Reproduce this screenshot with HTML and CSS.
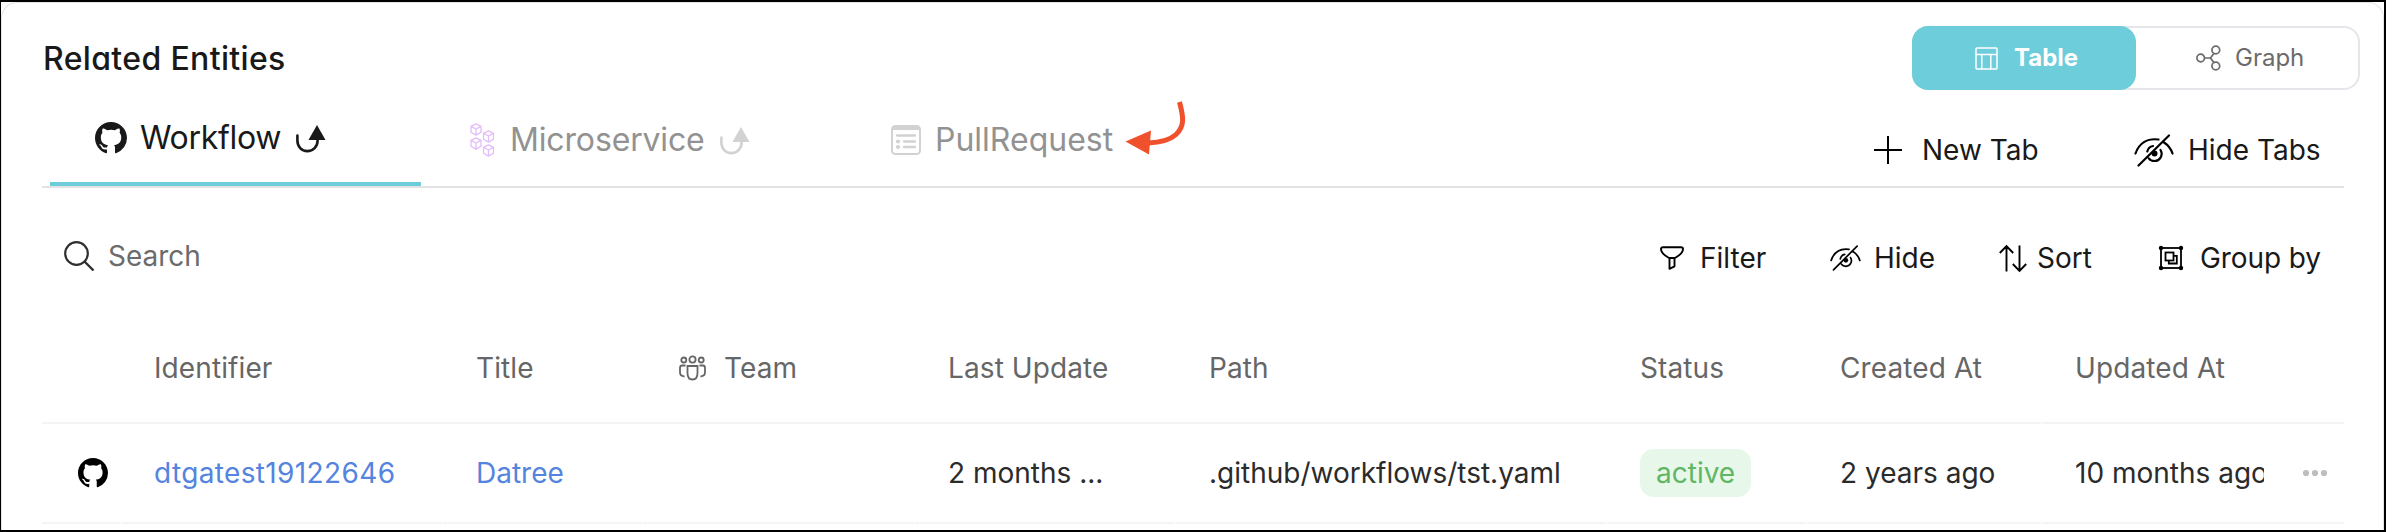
FILE: index.html
```html
<!DOCTYPE html>
<html lang="en">
<head>
<meta charset="utf-8">
<title>Related Entities</title>
<link rel="stylesheet" href="styles.css">
</head>
<body>
<svg width="0" height="0" class="defs">
  <symbol id="github" viewBox="0 0 16 16"><path fill="currentColor" d="M8 0C3.58 0 0 3.58 0 8c0 3.54 2.29 6.53 5.47 7.59.4.07.55-.17.55-.38 0-.19-.01-.82-.01-1.49-2.01.37-2.53-.49-2.69-.94-.09-.23-.48-.94-.82-1.13-.28-.15-.68-.52-.01-.53.63-.01 1.08.58 1.23.82.72 1.21 1.87.87 2.33.66.07-.52.28-.87.51-1.07-1.78-.2-3.64-.89-3.64-3.95 0-.87.31-1.59.82-2.15-.08-.2-.36-1.02.08-2.12 0 0 .67-.21 2.2.82.64-.18 1.32-.27 2-.27s1.36.09 2 .27c1.53-1.04 2.2-.82 2.2-.82.44 1.1.16 1.92.08 2.12.51.56.82 1.27.82 2.15 0 3.07-1.87 3.75-3.65 3.95.29.25.54.73.54 1.48 0 1.07-.01 1.93-.01 2.2 0 .21.15.46.55.38A8.01 8.01 0 0 0 16 8c0-4.42-3.58-8-8-8z"/></symbol>
  <symbol id="turn" viewBox="0 0 30 28"><path d="M1.400 10.500V15.500C1.400 21.500 5.500 26.100 11.300 26.100S21.600 21.700 21.600 15.500V12" fill="none" stroke="currentColor" stroke-width="2.600" stroke-linecap="round"/><path fill="currentColor" d="M21 0L29.500 15H12.500z"/></symbol>
  <symbol id="eye" viewBox="0 0 40 33"><g fill="none" stroke="currentColor" stroke-width="2.200" stroke-linecap="round"><path d="M1.500 19.500C5 9.500 13 4 24.500 5.500M30 8.500C34 11 37 15 38.500 19.500M4.500 31.500L35 1.500M13.300 17.500C14 14.500 16 12.500 19 12M26.500 16C29.500 21 26 27 20.500 27C18 27 16 26 14.800 24.300"/></g><circle cx="20.500" cy="19.500" r="3" fill="currentColor"/></symbol>
  <symbol id="cube" viewBox="0 0 12 13"><path d="M6 .8L11 3.300V9.200L6 12.100L1 9.200V3.300zM1.500 3.700L6 6L10.500 3.700M6 6V11.800" fill="none" stroke="currentColor" stroke-width="1.300" stroke-linejoin="round"/></symbol>
</svg>
<main class="card">
  <header class="head">
    <h1 class="title">Related Entities</h1>
    <div class="switch">
      <button class="mode mode-on">
        <svg class="mode-icon" width="23" height="23" viewBox="0 0 23 23"><path d="M2 1H21Q22 1 22 2V21Q22 22 21 22H2Q1 22 1 21V2Q1 1 2 1zM1 7.500H22M6.800 7.500V22M15.800 7.500V22" fill="none" stroke="currentColor" stroke-width="1.500"/></svg>
        <span>Table</span>
      </button>
      <button class="mode mode-off">
        <svg class="mode-icon" width="25" height="26" viewBox="0 0 25 26"><g fill="none" stroke="currentColor" stroke-width="1.700"><circle cx="4.700" cy="13" r="3.800"/><circle cx="19.800" cy="5" r="3.900"/><circle cx="19.800" cy="21" r="3.900"/><path d="M8.500 13H14.500M17.800 8.500L14.500 13L17.800 17.600"/></g></svg>
        <span>Graph</span>
      </button>
    </div>
  </header>

  <nav class="tabs">
    <div class="tab tab-on">
      <svg class="i-gh" width="32" height="32"><use href="#github"/></svg>
      <span class="tab-name workflow">Workflow</span>
      <svg class="i-turn" width="30" height="28"><use href="#turn"/></svg>
    </div>
    <div class="tab tab-micro">
      <svg class="i-cubes" width="25" height="34" viewBox="0 0 25 34"><use href="#cube" width="12" height="13"/><use href="#cube" x="12.500" y="7" width="12" height="13"/><use href="#cube" y="14" width="12" height="13"/><use href="#cube" x="12.500" y="21" width="12" height="13"/></svg>
      <span class="tab-name micro">Microservice</span>
      <svg class="i-turn" width="30" height="28"><use href="#turn"/></svg>
    </div>
    <div class="tab tab-pull">
      <svg class="i-form" width="30" height="30" viewBox="0 0 30 30"><rect x="1" y="1" width="28" height="28" rx="3.500" fill="none" stroke="currentColor" stroke-width="2"/><path d="M1 5V4Q1 1 4 1H26Q29 1 29 4V5z" fill="currentColor"/><path d="M6 10.500H24M13 16.500H24M13 22H24" stroke="currentColor" stroke-width="2.300" stroke-linecap="round"/><circle cx="7" cy="16.500" r="2.100" fill="currentColor"/><circle cx="7" cy="22" r="2.100" fill="currentColor"/></svg>
      <span class="tab-name pull">PullRequest</span>
      <svg class="i-red" width="61" height="54" viewBox="0 0 61 54"><path d="M54.500 1C58.500 16 60 25 51 33.500C44.500 39.500 35 41.500 23 42" fill="none" stroke="#ee512c" stroke-width="5"/><path d="M.5 40.500L26 29.500L24 53.500z" fill="#ee512c"/></svg>
    </div>
    <div class="tab-actions">
      <button class="action new-tab">
        <svg class="i-plus" width="28" height="28" viewBox="0 0 28 28"><path d="M14 0V28M0 14H28" stroke="currentColor" stroke-width="2"/></svg>
        <span>New Tab</span>
      </button>
      <button class="action hide-tabs">
        <svg class="i-eye" width="40" height="33"><use href="#eye"/></svg>
        <span>Hide Tabs</span>
      </button>
    </div>
  </nav>

  <div class="toolbar">
    <label class="search">
      <svg width="31" height="31" viewBox="0 0 31 31"><circle cx="12.500" cy="12.500" r="11.300" fill="none" stroke="#2f2f2f" stroke-width="2.200"/><path d="M20.500 20.500L29.500 29.500" stroke="#2f2f2f" stroke-width="2.400"/></svg>
      <span>Search</span>
    </label>
    <div class="tools">
      <button class="action filter">
        <svg width="24" height="24" viewBox="0 0 24 24"><path d="M3 1.200H21Q23 1.200 23 3Q23 7.500 15 12H9Q1 7.500 1 3Q1 1.200 3 1.200zM9.500 12V22.800L14.500 20.300V12" fill="none" stroke="currentColor" stroke-width="1.900" stroke-linejoin="round"/></svg>
        <span>Filter</span>
      </button>
      <button class="action hide">
        <svg width="31" height="26" viewBox="0 0 40 33" preserveAspectRatio="none"><use href="#eye" width="40" height="33"/></svg>
        <span>Hide</span>
      </button>
      <button class="action sort">
        <svg width="28" height="27" viewBox="0 0 28 27"><path d="M7.500 26.500V1.500M.8 8L7.500 1.200L14.200 8M20.500 .5V25.500M13.800 19L20.500 25.800L27.200 19" fill="none" stroke="currentColor" stroke-width="1.900"/></svg>
        <span>Sort</span>
      </button>
      <button class="action group">
        <svg width="24" height="24" viewBox="0 0 24 24"><g fill="none" stroke="currentColor" stroke-width="1.800"><rect x="2" y="2" width="20" height="20"/><rect x="6.500" y="6.500" width="8" height="8"/><path d="M14.500 9.800H17.800V17.500H9.800V14.500"/></g><g fill="currentColor"><circle cx="2" cy="2" r="2.200"/><circle cx="22" cy="2" r="2.200"/><circle cx="2" cy="22" r="2.200"/><circle cx="22" cy="22" r="2.200"/></g></svg>
        <span>Group by</span>
      </button>
    </div>
  </div>

  <section class="table">
    <div class="row row-head">
      <div class="cell"></div>
      <div class="cell">Identifier</div>
      <div class="cell title-cell">Title</div>
      <div class="cell team">
        <svg width="27" height="26" viewBox="0 0 27 26"><g fill="none" stroke="currentColor" stroke-width="1.800"><circle cx="13.500" cy="4.500" r="3.100"/><circle cx="4.800" cy="5" r="2.500"/><circle cx="22.200" cy="5" r="2.500"/><path d="M8.500 11H18.500V18Q18.500 24.500 13.500 24.500T8.500 18zM6.500 10.500H3Q1 10.500 1 13V17.500Q1 21 5.500 21.500M20.500 10.500H24Q26 10.500 26 13V17.500Q26 21 21.500 21.500"/></g></svg>
        <span>Team</span>
      </div>
      <div class="cell">Last Update</div>
      <div class="cell">Path</div>
      <div class="cell">Status</div>
      <div class="cell">Created At</div>
      <div class="cell updated">Updated At</div>
    </div>
    <div class="row row-data">
      <div class="cell source"><svg width="30" height="30"><use href="#github"/></svg></div>
      <div class="cell"><a class="link ident">dtgatest19122646</a></div>
      <div class="cell title-cell"><a class="link">Datree</a></div>
      <div class="cell"></div>
      <div class="cell">2 months ...</div>
      <div class="cell">.github/workflows/tst.yaml</div>
      <div class="cell status"><span class="badge">active</span></div>
      <div class="cell">2 years ago</div>
      <div class="cell updated">
        <span class="clip">10 months ago</span>
        <svg width="26" height="8" viewBox="0 0 26 8"><g fill="#bdbdbd"><circle cx="4" cy="4" r="3.100"/><circle cx="13" cy="4" r="3.100"/><circle cx="22" cy="4" r="3.100"/></g></svg>
      </div>
    </div>
  </section>
</main>
</body>
</html>
```
FILE: styles.css
```css
* { box-sizing: border-box; }
body {
  margin: 0;
  height: 532px;
  overflow: hidden;
  border: solid #000;
  border-width: 2px 2px 2px 1px;
  background: #fff;
  font-family: Inter, "Liberation Sans", sans-serif;
  font-size: 28px;
  line-height: 34px;
  color: #191919;
}
.defs { display: block; }
svg { flex: none; display: block; overflow: visible; }
button { font: inherit; color: inherit; background: none; border: 0; padding: 0; margin: 0; text-align: left; }
span, .cell { white-space: nowrap; }

.card {
  height: 528px;
  border: 1px solid #e4e4e4;
  border-bottom: 0;
  border-radius: 16px 16px 0 0;
  padding: 23px 23px 0 40px;
  background: #fff;
}
.head { display: flex; justify-content: space-between; align-items: center; height: 64px; }
.title {
  margin: 0;
  padding: 2px 0 0 1px;
  font-size: 32px;
  line-height: 40px;
  font-weight: 500;
  letter-spacing: 0.35px;
  font-feature-settings: "cv11";
}

.switch {
  display: flex;
  width: 448px;
  height: 64px;
  border-radius: 16px;
  box-shadow: inset 0 0 0 2px #e6e6ea;
  font-size: 24px;
}
.mode { display: flex; align-items: center; width: 224px; height: 64px; border-radius: 16px; }
.mode-on { background: #6dcddb; color: #fff; font-weight: 700; padding-left: 63px; gap: 16px; }
.mode-off { color: #6b6b6b; padding-left: 60px; gap: 14px; }

.tabs { display: flex; width: 2302px; height: 98px; padding-left: 8px; border-bottom: 2px solid #e3e3e3; }
.tab { display: flex; align-items: center; font-size: 32px; line-height: 40px; }
.tab-on { width: 371px; padding-left: 45px; border-bottom: 4px solid #6dcddb; padding-top: 4px; }
.i-gh { margin-right: 13px; }
.workflow { width: 156px; letter-spacing: -0.3px; }
.i-turn { margin-top: 2px; }
.tab-micro { width: 421px; padding: 3px 0 0 49px; color: #d2d2d2; }
.i-cubes { color: #e3bdfb; margin-right: 15px; }
.tab-name { flex: none; }
.tab-micro .tab-name, .tab-pull .tab-name { color: #929292; }
.micro { width: 210px; letter-spacing: -0.15px; }
.tab-pull { padding: 3px 0 0 49px; color: #d2d2d2; }
.i-form { margin-right: 14px; }
.pull { width: 190px; }
.i-red { margin-bottom: 24px; }

.tab-actions { display: flex; margin-left: auto; padding-top: 24px; width: 470px; }
.action { display: flex; align-items: center; }
.action svg { color: #000; }
.new-tab { width: 260px; gap: 20px; }
.hide-tabs { gap: 14px; }

.toolbar { display: flex; justify-content: space-between; width: 2302px; height: 124px; padding-top: 14px; }
.search { display: flex; align-items: center; gap: 13px; padding: 0 0 2px 22px; color: #6b6b6b; }
.tools { display: flex; width: 684px; padding-top: 2px; }
.filter { width: 170px; gap: 16px; }
.hide { width: 169px; gap: 13px; }
.sort { width: 160px; gap: 10px; }
.group { gap: 17px; letter-spacing: -0.1px; }

.row { display: grid; width: 2302px; }
.cell { display: flex; align-items: center; padding-left: 33px; border-bottom: 2px solid #f4f4f4; min-width: 0; }
.row-head {
  grid-template-columns: 79px 322px 200px 272px 261px 431px 200px 235px 1fr;
  height: 112px;
  color: #666;
  letter-spacing: 0.1px;
}
.row-head .cell { padding-top: 2px; }
.row-head .cell:nth-child(8) { margin-right: 1px; }
.row-data {
  grid-template-columns: 78px 321px 199px 271px 260px 430px 199px 234px 1fr;
  column-gap: 1px;
  height: 100px;
  color: #2b2b2b;
}
.row-head .team { padding-left: 36px; gap: 18px; }
.source { color: #000; padding-left: 36px; }
.link { color: #5484de; }
.ident { letter-spacing: 0.36px; }
.badge { height: 48px; padding: 7px 16px; border-radius: 14px; background: #e7f7e9; color: #61b665; }
.clip { width: 189px; overflow: hidden; margin-right: 38px; }
```
